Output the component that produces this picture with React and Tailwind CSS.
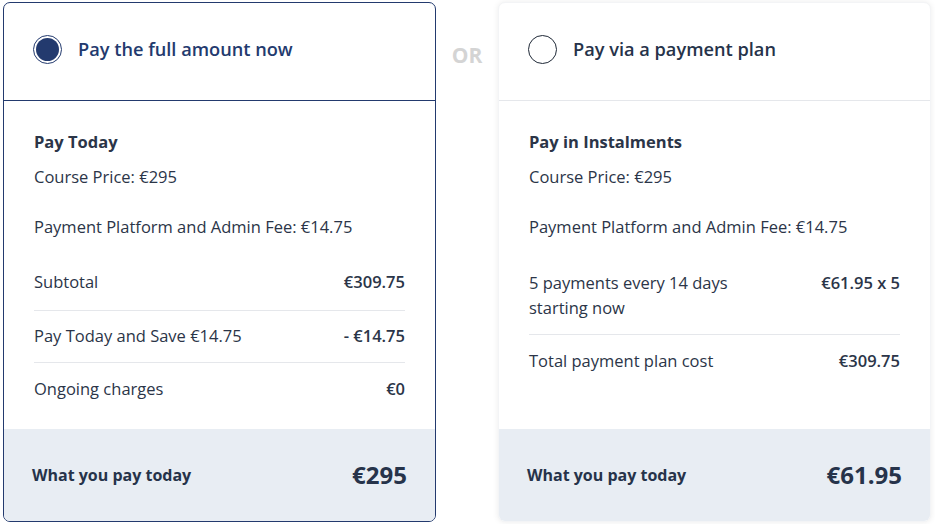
import React from 'react';

const font = { fontFamily: '"Open Sans", "Liberation Sans", sans-serif' };

const Radio = ({ checked }) =>
  checked ? (
    <span className="flex h-[29px] w-[29px] items-center justify-center rounded-full border border-[#233a6e] bg-white">
      <span className="h-[23px] w-[23px] rounded-full bg-[#233a6e]" />
    </span>
  ) : (
    <span className="h-[29px] w-[29px] rounded-full border border-[#1f2937] bg-white" />
  );

const Row = ({ label, value, className = '' }) => (
  <div className={`flex justify-between text-[16.5px] leading-[24px] ${className}`}>
    <span>{label}</span>
    <span className="font-semibold">{value}</span>
  </div>
);

const Card = ({ selected, title, heading, children, total }) => (
  <div
    className={`flex h-[520px] w-[433px] flex-col rounded-[7px] bg-white ${
      selected ? 'border border-[#233a6e]' : 'border border-[#f3f4f6] shadow-[0_0_6px_rgba(0,0,0,0.08)]'
    }`}
  >
    <div
      className={`flex h-[98px] items-center gap-[16px] pb-[4px] pl-[29px] border-b ${
        selected ? 'border-[#233a6e] text-[#233a6e]' : 'border-[#e5e7eb] text-[#26334a]'
      }`}
    >
      <Radio checked={selected} />
      <span className="text-[18.2px] font-semibold">{title}</span>
    </div>
    <div className="flex flex-col px-[30px] pt-[29px] text-[#2b3548]">
      <div className="text-[16.5px] font-bold leading-[24px]">{heading}</div>
      <div className="mt-[11px] text-[16.5px] leading-[24px]">Course Price: €295</div>
      <div className="mt-[26px] text-[16.5px] leading-[24px]">Payment Platform and Admin Fee: €14.75</div>
      {children}
    </div>
    <div className="mt-auto flex h-[92px] items-center justify-between rounded-b-[6px] bg-[#e8edf3] pl-[28px] pr-[28px] text-[#26334a]">
      <span className="text-[16px] font-bold">What you pay today</span>
      <span className="text-[24px] font-bold">{total}</span>
    </div>
  </div>
);

export default function App() {
  return (
    <div className="flex min-h-[524px] bg-white pl-[3px] pt-[2px]" style={font}>
      <Card selected title="Pay the full amount now" heading="Pay Today" total="€295">
        <Row label="Subtotal" value="€309.75" className="mt-[31px] pb-[16px] border-b border-[#e5e7eb]" />
        <Row label="Pay Today and Save €14.75" value="- €14.75" className="pt-[13px] pb-[14px] border-b border-[#e5e7eb]" />
        <Row label="Ongoing charges" value="€0" className="pt-[14px]" />
      </Card>
      <div className="flex w-[62px] justify-center pt-[39px]">
        <span className="text-[21px] font-bold leading-[28px] text-[#d4d4d4]">OR</span>
      </div>
      <Card title="Pay via a payment plan" heading="Pay in Instalments" total="€61.95">
        <div className="mt-[31px] flex justify-between border-b border-[#e5e7eb] pb-[14px] text-[16.5px] leading-[25px]">
          <span>
            5 payments every 14 days
            <br />
            starting now
          </span>
          <span className="font-semibold">€61.95 x 5</span>
        </div>
        <Row label="Total payment plan cost" value="€309.75" className="pt-[14px]" />
      </Card>
    </div>
  );
}
